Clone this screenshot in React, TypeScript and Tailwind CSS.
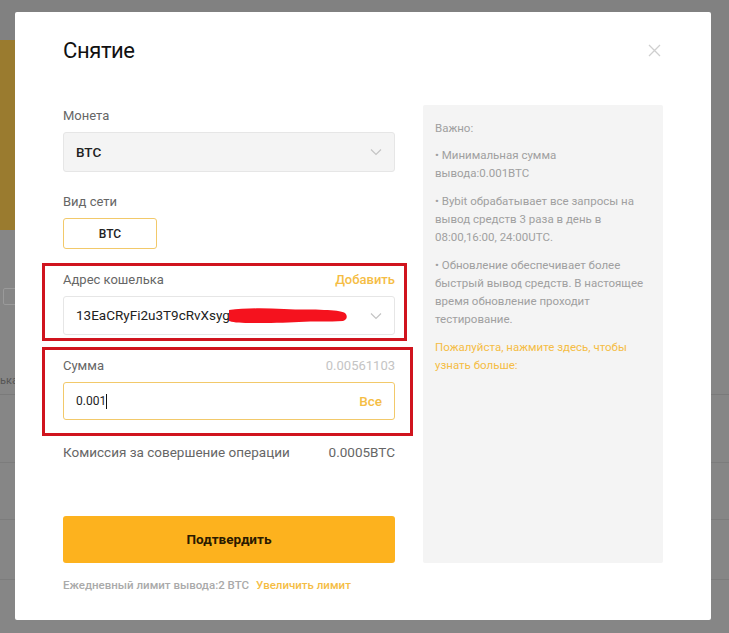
import React from "react";

const Chevron = () => (
  <svg width="12" height="8" viewBox="0 0 12 8" fill="none">
    <path d="M1 1.5 L6 6.5 L11 1.5" stroke="#c4c4c4" strokeWidth="1.2" />
  </svg>
);

export default function App() {
  return (
    <div
      className="relative w-[729px] h-[633px] bg-[#868686] overflow-hidden"
      style={{ fontFamily: "Roboto, 'Noto Sans', sans-serif" }}
    >
      {/* background page */}
      <div className="flex flex-col">
        <div className="h-[40px] bg-[#818181]" />
        <div className="flex h-[190px]">
          <div className="w-[200px] bg-[#9a7b2f]" />
          <div className="flex-1 bg-[#818181]" />
        </div>
        <div className="h-[75px] flex items-end pl-[3px]">
          <div className="w-[20px] h-[17px] border border-[#9a9a9a] rounded-[2px]" />
        </div>
        <div className="h-[90px] border-b border-[#7a7a7a] flex items-end pb-[6px]">
          <span className="text-[11px] leading-[14px] text-[#555]">ька</span>
        </div>
        <div className="h-[68px] border-b border-[#7c7c7c]" />
        <div className="h-[57px] border-b border-[#7c7c7c]" />
        <div className="h-[60px] border-b border-[#7c7c7c]" />
      </div>

      {/* modal */}
      <div className="absolute left-[15px] top-[12px] w-[696px] h-[608px] bg-white rounded-[2px] px-[48px] pt-[24px]">
        <div className="flex items-center justify-between h-[28px]">
          <div className="text-[22px] text-[#111] tracking-[-0.4px]">Снятие</div>
          <svg width="13" height="13" viewBox="0 0 13 13" className="mr-[2px] mt-[1px]">
            <path d="M1 1 L12 12 M12 1 L1 12" stroke="#cfcfcf" strokeWidth="1.3" />
          </svg>
        </div>

        <div className="flex mt-[41px] gap-[28px]">
          {/* left column */}
          <div className="w-[332px] flex flex-col">
            <div className="mt-[2px] h-[18px] leading-[18px] text-[13px] text-[#666]">Монета</div>
            <div className="mt-[7px] h-[40px] rounded-[3px] bg-[#f4f4f4] border border-[#e6e6e6] flex items-center justify-between pl-[12px] pr-[12px]">
              <span className="text-[13.5px] font-medium text-[#222]">BTC</span>
              <Chevron />
            </div>

            <div className="mt-[21px] h-[18px] leading-[18px] text-[13px] text-[#666]">Вид сети</div>
            <div className="mt-[7px] h-[31px] w-[94px] rounded-[3px] border border-[#f2c96a] flex items-center justify-center text-[12px] font-medium text-[#222]">
              BTC
            </div>

            <div className="mt-[22px] h-[18px] leading-[18px] flex justify-between text-[13px]">
              <span className="text-[#666]">Адрес кошелька</span>
              <span className="text-[#f5bd45] font-medium">Добавить</span>
            </div>
            <div className="mt-[7px] h-[39px] rounded-[3px] bg-white border border-[#e6e6e6] flex items-center justify-between pl-[12px] pr-[12px]">
              <div className="flex items-center">
                <span className="text-[13.5px] text-[#222]">13EaCRyFi2u3T9cRvXsyg</span>
                <svg width="120" height="20" viewBox="0 0 120 20" className="-ml-[1px]">
                  <path
                    d="M0 4 C15 2 35 2 55 3 C70 4 85 3 95 4 C105 4 112 5 116 7 C119 10 118 14 114 15 C100 16 85 15 70 16 C55 17 35 17 20 17 C10 17 2 16 0 15 Z"
                    fill="#f5121e"
                  />
                </svg>
              </div>
              <Chevron />
            </div>

            <div className="mt-[22px] h-[18px] leading-[18px] flex justify-between text-[13px]">
              <span className="text-[#666]">Сумма</span>
              <span className="text-[#c4c4c4]">0.00561103</span>
            </div>
            <div className="mt-[7px] h-[38px] rounded-[3px] bg-white border border-[#f2c96a] flex items-center justify-between pl-[12px] pr-[12px]">
              <span className="text-[12px] text-[#222] flex items-center">
                0.001<span className="inline-block w-[1px] h-[15px] bg-[#111]" />
              </span>
              <span className="text-[13.5px] font-medium text-[#f5bd45]">Все</span>
            </div>

            <div className="mt-[23px] h-[18px] leading-[18px] flex justify-between text-[13.5px] text-[#666]">
              <span>Комиссия за совершение операции</span>
              <span>0.0005BTC</span>
            </div>

            <button className="mt-[55px] h-[47px] rounded-[3px] bg-[#fdb21e] text-[13.5px] font-bold text-[#2a1a00]">
              Подтвердить
            </button>

            <div className="mt-[13px] h-[18px] leading-[18px] text-[11.5px] font-medium">
              <span className="text-[#aaa]">Ежедневный лимит вывода:2 BTC</span>
              <span className="text-[#f5bd45] ml-[7px]">Увеличить лимит</span>
            </div>
          </div>

          {/* right panel */}
          <div className="w-[240px] h-[458px] bg-[#f4f4f4] rounded-[2px] px-[12px] pt-[14px] text-[11.5px] leading-[18px] text-[#a0a0a0]">
            <div>Важно:</div>
            <div className="mt-[9px]">
              <div className="whitespace-nowrap">• Минимальная сумма</div>
              <div className="whitespace-nowrap">вывода:0.001BTC</div>
            </div>
            <div className="mt-[10px]">
              <div className="whitespace-nowrap">• Bybit обрабатывает все запросы на</div>
              <div className="whitespace-nowrap">вывод средств 3 раза в день в</div>
              <div className="whitespace-nowrap">08:00,16:00, 24:00UTC.</div>
            </div>
            <div className="mt-[10px]">
              <div className="whitespace-nowrap">• Обновление обеспечивает более</div>
              <div className="whitespace-nowrap">быстрый вывод средств. В настоящее</div>
              <div className="whitespace-nowrap">время обновление проходит</div>
              <div className="whitespace-nowrap">тестирование.</div>
            </div>
            <div className="mt-[10px] text-[#f5bd45]">
              <div className="whitespace-nowrap">Пожалуйста, нажмите здесь, чтобы</div>
              <div className="whitespace-nowrap">узнать больше:</div>
            </div>
          </div>
        </div>
      </div>

      {/* red annotation boxes */}
      <div className="absolute left-[42px] top-[263px] w-[365px] h-[78px] border-[3px] border-[#d0141e]" />
      <div className="absolute left-[42px] top-[347px] w-[371px] h-[89px] border-[3px] border-[#d0141e]" />
    </div>
  );
}
